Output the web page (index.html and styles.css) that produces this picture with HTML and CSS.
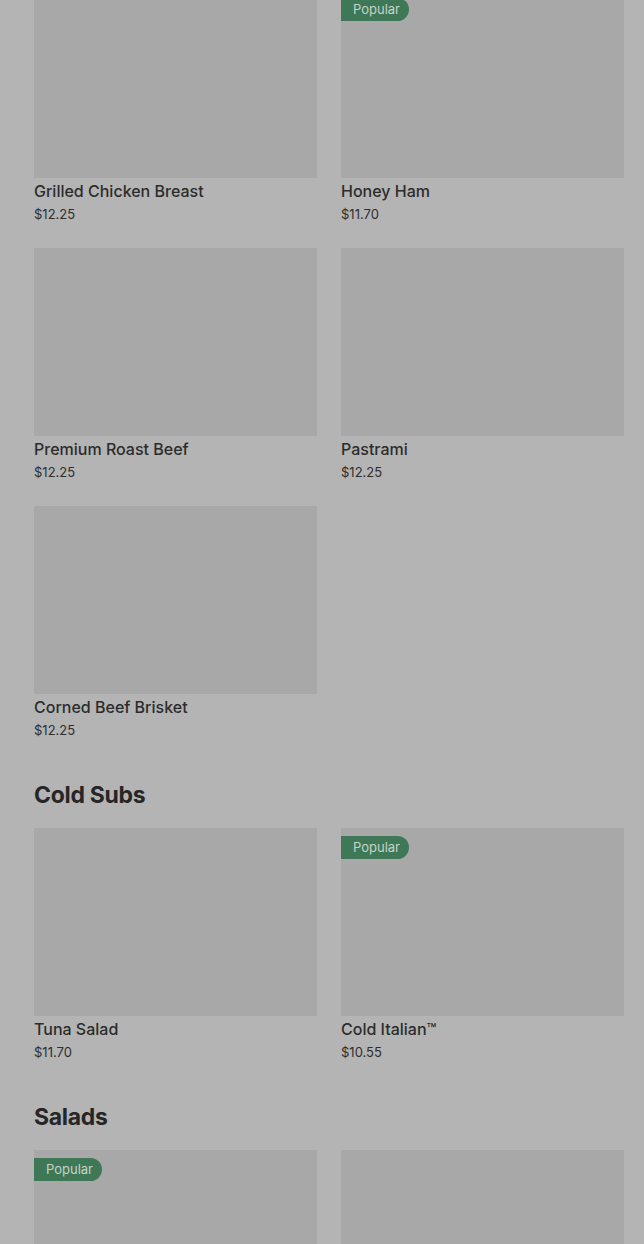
FILE: index.html
```html
<!DOCTYPE html>
<html>
<head>
<meta charset="utf-8">
<link rel="stylesheet" href="styles.css">
</head>
<body>
<div class="page">
  <section class="section first">
    <div class="grid">
      <div class="card">
        <div class="thumb"></div>
        <div class="name">Grilled Chicken Breast</div>
        <div class="price">$12.25</div>
      </div>
      <div class="card">
        <div class="thumb"><span class="badge">Popular</span></div>
        <div class="name">Honey Ham</div>
        <div class="price">$11.70</div>
      </div>
      <div class="card">
        <div class="thumb"></div>
        <div class="name">Premium Roast Beef</div>
        <div class="price">$12.25</div>
      </div>
      <div class="card">
        <div class="thumb"></div>
        <div class="name">Pastrami</div>
        <div class="price">$12.25</div>
      </div>
      <div class="card">
        <div class="thumb"></div>
        <div class="name">Corned Beef Brisket</div>
        <div class="price">$12.25</div>
      </div>
    </div>
  </section>
  <section class="section">
    <h2 class="heading">Cold Subs</h2>
    <div class="grid">
      <div class="card">
        <div class="thumb"></div>
        <div class="name">Tuna Salad</div>
        <div class="price">$11.70</div>
      </div>
      <div class="card">
        <div class="thumb"><span class="badge">Popular</span></div>
        <div class="name">Cold Italian™</div>
        <div class="price">$10.55</div>
      </div>
    </div>
  </section>
  <section class="section">
    <h2 class="heading">Salads</h2>
    <div class="grid">
      <div class="card">
        <div class="thumb"><span class="badge">Popular</span></div>
      </div>
      <div class="card">
        <div class="thumb"></div>
      </div>
    </div>
  </section>
</div>
</body>
</html>
```

FILE: styles.css
```css
html, body {
  margin: 0;
  padding: 0;
  background: #b4b4b4;
  overflow: hidden;
}
body {
  font-family: Inter, "Noto Sans", sans-serif;
  color: #2a2a2a;
}
.page {
  margin-top: -10px;
  padding: 0 20px 0 34px;
}
.section {
  margin-bottom: 43px;
}
.heading {
  margin: 0 0 19px 0;
  font-size: 23px;
  font-weight: 700;
  line-height: 28px;
  letter-spacing: -0.3px;
  color: #262626;
}
.grid {
  display: grid;
  grid-template-columns: 283px 283px;
  column-gap: 24px;
  row-gap: 26px;
}
.card {
  display: flex;
  flex-direction: column;
}
.thumb {
  position: relative;
  height: 188px;
  background: #a8a8a8;
}
.badge {
  position: absolute;
  left: 0;
  top: 8px;
  height: 23px;
  width: 68px;
  box-sizing: border-box;
  padding-left: 12px;
  background: #3e7856;
  color: #c6d3ca;
  font-size: 13px;
  line-height: 23px;
  border-radius: 0 12px 12px 0;
}
.name {
  margin-top: 4px;
  font-size: 16px;
  font-weight: 500;
  line-height: 19px;
  color: #2c2c2c;
}
.price {
  margin-top: 5px;
  font-size: 13px;
  line-height: 16px;
  color: #2e2e2e;
}
```
